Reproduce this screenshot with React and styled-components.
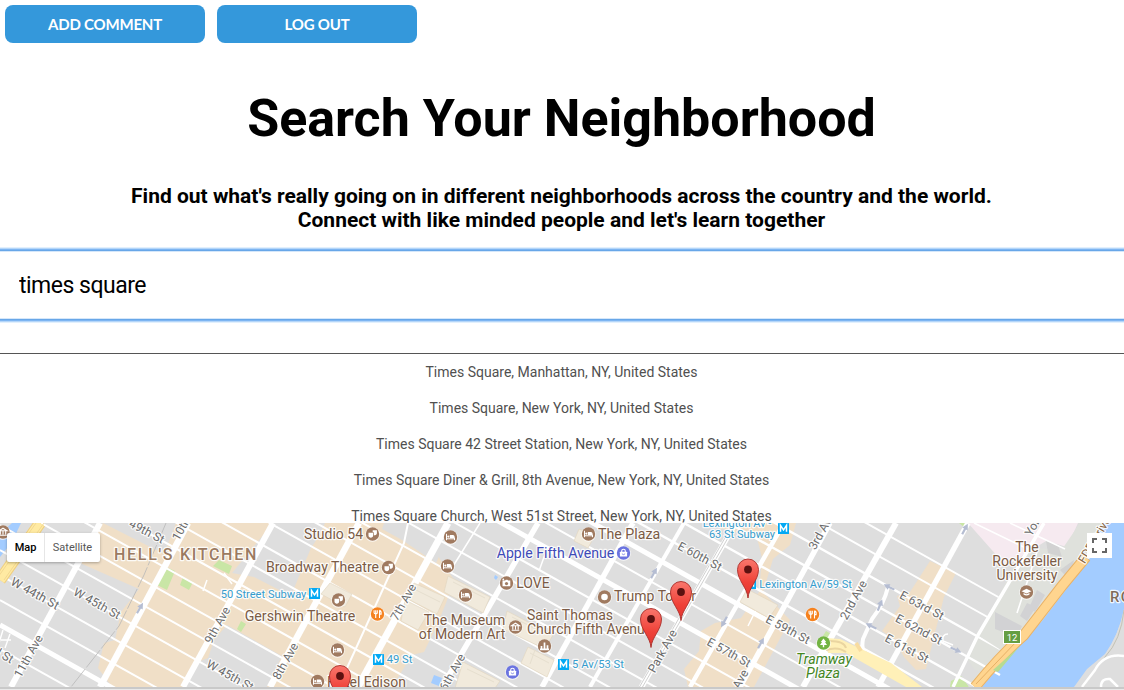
import React from "react";
import styled, { createGlobalStyle } from "styled-components";

const Global = createGlobalStyle`
  * { box-sizing: border-box; }
  body { margin: 0; background: #fff; font-family: Roboto, "Liberation Sans", sans-serif; overflow: hidden; }
`;
const Page = styled.main`
  display: flex;
  flex-direction: column;
  height: 690px;
  overflow: hidden;
`;
const Toolbar = styled.nav`
  display: flex;
  gap: 12px;
  padding: 5px 5px 0;
  height: 43px;
`;
const Button = styled.button`
  width: 200px;
  height: 38px;
  border: 0;
  border-radius: 8px;
  background: #3498db;
  color: #fff;
  font: 700 15px/38px Lato, sans-serif;
  letter-spacing: -0.2px;
  padding: 0;
`;
const Title = styled.h1`
  margin: 45px 1px 0 0;
  text-align: center;
  font-size: 52px;
  line-height: 62px;
  font-weight: 700;
`;
const Subtitle = styled.h2`
  margin: 34px 1px 0 0;
  text-align: center;
  font-size: 21px;
  line-height: 24px;
  font-weight: 700;
`;
const SearchInput = styled.input`
  flex: none;
  margin: 18px 0 0 -2px;
  width: 1128px;
  height: 70px;
  border: 1px solid #68a7e8;
  outline: 0;
  box-shadow: 0 0 0 1px #7db5f2, 0 0 0 2px #b5d6f9, 0 0 0 3px #e2f0fd, inset 0 0 0 1px #d5e7fa;
  padding: 0 20px;
  color: #000;
  font: 400 23px Roboto, sans-serif;
  letter-spacing: -0.5px;
`;
const Results = styled.ul`
  flex: none;
  list-style: none;
  margin: 33px 0 0;
  padding: 0;
  height: 170px;
  border-top: 1px solid #555;
  overflow: hidden;
`;
const Result = styled.li`
  height: 36px;
  margin-right: 1px;
  line-height: 36px;
  text-align: center;
  font-size: 14px;
  color: #505050;
`;
const MapFrame = styled.section`
  position: relative;
  flex: none;
  height: 167px;
  border-bottom: 1px solid #e9e9e9;
  background: #c9c9c9;
`;
const MapDrawing = styled.svg`
  display: block;
  font-family: Roboto, sans-serif;
`;
const MapTypes = styled.div`
  position: absolute;
  left: 7px;
  top: 10px;
  display: flex;
  height: 29px;
  background: #fff;
  border-radius: 2px;
  box-shadow: 0 1px 3px rgba(0, 0, 0, 0.3);
`;
const MapType = styled.div`
  width: ${(p) => p.$width}px;
  text-align: center;
  font-size: 11px;
  line-height: 29px;
  font-weight: ${(p) => (p.$active ? 500 : 400)};
  color: ${(p) => (p.$active ? "#000" : "#565656")};
  & + & { border-left: 1px solid #e6e6e6; }
`;
const Fullscreen = styled.div`
  position: absolute;
  left: 1087px;
  top: 10px;
  width: 25px;
  height: 25px;
  display: grid;
  place-items: center;
  background: #fff;
`;

const results = [
  "Times Square, Manhattan, NY, United States",
  "Times Square, New York, NY, United States",
  "Times Square 42 Street Station, New York, NY, United States",
  "Times Square Diner & Grill, 8th Avenue, New York, NY, United States",
  "Times Square Church, West 51st Street, New York, NY, United States",
];

// Height at x = 0 of every cross street, and its width
const streets = [
  [649, 2], [625, 5], [600, 2], [575, 2], [550, 2], [525, 2], [500, 2], [475, 2],
  [450, 2.2], [424, 2], [398, 2], [372, 2], [346, 2], [320, 2], [294, 2],
  [268, 2], [242, 5], [217, 2], [191, 5], [165, 2.4], [140, 2.4], [115, 2.4], [89, 2.4],
  [64, 2], [38, 2],
];
// Avenues: x at the top edge, x at the bottom edge, width
const avenues = [
  [100, 11, 6], [188, 100, 6.5], [273, 183, 6], [359, 270, 6.5], [448, 358, 7],
  [538, 442, 5.5], [633, 542, 5.5], [684, 590, 4], [784, 690, 4.5],
  [830, 740, 5.5], [896, 803, 6], [968, 878, 5.5],
];

const Label = ({ x, y, children, size = 14, color = "#7b5b45", rotate = 0, anchor = "middle", ...rest }) => (
  <text
    x={x} y={y} fontSize={size} fill={color} textAnchor={anchor} stroke="#fff" strokeOpacity="0.85"
    strokeWidth="2.4" strokeLinejoin="round" paintOrder="stroke"
    transform={rotate ? `rotate(${rotate} ${x} ${y})` : undefined} {...rest}
  >
    {children}
  </text>
);
const Street = (p) => <Label size={12} color="#6b6b6b" {...p} />;
const Metro = ({ x, y }) => (
  <g>
    <rect x={x - 5.5} y={y - 5.5} width="11" height="11" rx="0.6" fill="#03a9f4" />
    <path d={`M${x - 3} ${y + 3.3}v-6.4l3 4.5 3-4.5v6.4`} fill="none" stroke="#fff" strokeWidth="1.5" />
  </g>
);
const glyphs = {
  bed: <g><path d="M-4-3.2v6.4M-4 1.8h8M4 3.2V.6" fill="none" stroke="#fff" strokeWidth="1" /><path d="M-.7-2h3.2Q4-2 4-.4V1H-.7z" fill="#fff" /><circle cx="-2.2" cy="-.4" r="1.1" fill="#fff" /></g>,
  theatre: <g fill="#fff"><path d="M-4-1.3h4.6v2.8c0 1.3-1 2.2-2.3 2.2S-4 2.8-4 1.5z" /><path d="M.2-3.8h4.2V-1c0 1.3-.8 2.1-1.9 2.2H1.3v-3H.2z" /></g>,
  museum: <path d="M-4-1.2L0-3.8l4 2.6zM-3.8 3.2h7.6M-2.7-1v3.4M0-1v3.4M2.7-1v3.4" fill="none" stroke="#fff" strokeWidth="1.1" />,
  food: <path d="M-1.8-3.7v7.7M-3.4-3.7v2.4q0 1 1.6 1t1.6-1v-2.4M2-3.8v7.8M2-3.6q2 .3 1.6 3.7H2" fill="none" stroke="#fff" strokeWidth="1.1" />,
  bag: <g><rect x="-3.6" y="-1.2" width="7.2" height="4.7" rx=".5" fill="#fff" /><path d="M-1.8-1v-1q0-1.7 1.8-1.7T1.8-2v1" fill="none" stroke="#fff" strokeWidth="1.1" /><path d="M-1.6.8q1.6 1.7 3.2 0" fill="none" stroke="#6b74e0" strokeWidth=".8" /></g>,
  city: <path d="M-3 3.5V0M0 3.5v-7M3 3.5V-.8M-4.5 3.3h9" stroke="#fff" strokeWidth="1.7" />,
  dot: <circle r="3.3" fill="#fff" />,
  camera: <g><path d="M-4-2.4h2.6l.8-.9H1l.6.9h2.2v5.6H-4z" fill="#fff" /><circle cx="0" cy=".6" r="1.6" fill="#a07d63" /><circle cx="-3.2" cy="-3.6" r=".9" fill="#fff" /></g>,
  school: <path d="M-5-.8L0-3.2l5 2.4L0 1.6zM-3 .9v1.6q3 1.8 6 0V.9L0 2.3zM4.3-.6v3" fill="#fff" />,
  tree: <path d="M0-4.6L2.7-1H1.5l2 3H.7v2.2H-.7V2h-2.8l2-3h-1.2z" fill="#fff" />,
};
const Poi = ({ x, y, kind, color = "#a07a60" }) => (
  <g transform={`translate(${x} ${y})`}>
    <circle r="7.3" cy=".5" fill="#fff" opacity=".8" />
    <circle r="6.7" fill={color} />
    {glyphs[kind]}
  </g>
);
const Pin = ({ x, y }) => (
  <g transform={`translate(${x} ${y})`}>
    <path d="M0 28.5C-.7 18-10.5 11-10.5 0A10.5 10.5 0 0 1 10.5 0C10.5 11 .7 18 0 28.5z" fill="url(#pin)" stroke="#a92c28" strokeWidth=".9" />
    <circle r="3.9" fill="#5c1110" />
  </g>
);
const Arrow = ({ x, y, rotate }) => (
  <path transform={`translate(${x} ${y}) rotate(${rotate})`} d="M-6-1.1h6v-2L6 0 0 3.1v-2h-6z" fill="#b5bdd2" />
);

function CityMap() {
  const y0 = 523;
  const blue = "#369ccd";
  return (
    <MapDrawing width="1124" height="164" viewBox="0 523 1124 164">
      <defs>
        <linearGradient id="pin" x1="0" y1="0" x2="0" y2="1">
          <stop offset="0" stopColor="#fa776d" />
          <stop offset=".6" stopColor="#ef4138" />
          <stop offset="1" stopColor="#df3630" />
        </linearGradient>
      </defs>
      <rect y={y0} width="1124" height="164" fill="#dedede" />
      <g fill="#f0dfc7">
        <path d="M103 523L164 554L176 523H412L430 540L438 556L454 580L446 603L437 625L424 652L412 655L392 687H112L98 668L104 643L115 640L121 612L139 589L80 563L96 535z" />
        <path d="M722 523h74l-6 22-17 14-10 33 27 28-36 67h-66l-4-18 15-18 2-20 14-8 26-5 18-26 3-34-5-20-38-10z" />
        <path d="M930 561l26 12-12 24-18 72-10 1-12-13-10-18-12-8 18-25-3-10 13-4z" />
      </g>
      <g fill="#dedede">
        <path d="M273 523h52l-6 13-8 12-16 38-4 10-37-19-22-4z" />
        <path d="M227 625l55 31-15 31h-82l13-25 10-4 6-18z" />
        <path d="M384 523h70l-18 40-34-23-20-11z" />
      </g>
      <g fill="#c9e6a6">
        <path d="M166 567l9 4-8 19-10-5zM183 577l10 5-4 8-9-5zM219 560l13 6-3 8-16-8zM241 621l5 3-5 8-4-3z" />
        <path d="M826 631l7 4-5 9-7-5zM951 681l10-5 8 11h-19zM959 523h9l-4 4z" />
      </g>
      <path d="M968 523h110l-11 24-21-6-40 25z" fill="#f6eaf0" />
      <path d="M978 631l28 17-17 27-15-6-7-10z" fill="#dfe1dc" />
      <path d="M1080 523h44v60l-90 60-66 44z" fill="#dfe1dc" />
      <path d="M1102 523l-9 24-10 20L982 687h94l8-9 21-23q13-18 19-46V523z" fill="#a3ccff" />
      <path d="M1124 610q-5 24-19 44l-18 15-13 18h50z" fill="#dedede" />
      <path d="M1124 610q-3 30-19 47l-22 30" fill="none" stroke="#c3c2b4" />
      <path d="M1124 656q-20-3-29 14l-13 17M1101 687q0-9 9-8l8 8" fill="none" stroke="#fff" strokeWidth="2.5" />
      <path d="M12 523h9l-9 19-12 15v-23z" fill="#a3ccff" />
      <path d="M0 556v14l-3 3z" fill="#a3ccff" />
      <path d="M434 675l8 3-3 8-8-3zM495 575l3 2-2 3-2-2z" fill="#a3ccff" />

      <g stroke="#fff" fill="none">
        {streets.map(([c, w]) => {
          const end = c < 300 ? 1000 : 700;
          return <path key={c} d={`M0 ${c}L${end} ${c + 0.56 * end}`} strokeWidth={w} />;
        })}
      </g>
      <path d="M1030 548l40 2 12 10-15 28-25 33-35 33-28-18 28-56z" fill="#dfe1dc" />
      <path d="M1046 541l12 4 4 12-14-4zM1060 570l14-10-4 20z" fill="#d2d2d2" />
      <g stroke="#fff" fill="none">
        {avenues.map(([a, b, w]) => (
          <path key={a} d={`M${a} 523L${b} 687`} strokeWidth={w} />
        ))}
        <path d="M408 523l-4 20-57 125" strokeWidth="2" />
        <path d="M1044 523l-66 112-25 52" strokeWidth="3.5" />
        <path d="M974 523l60 29M1010 523l55 26M1037 552l-20 61" strokeWidth="1.6" />
        <path d="M888 587q-4 17-16 32l-9 20q-3 16 8 20l43 28" strokeWidth="4" />
        <path d="M480 523l-30 48M548 546l-9 25M758 606l-10 20M207 580l-4 11M224 573l8 11" strokeWidth="1.5" />
      </g>
      <path d="M734 523L640 687M737 523L643 687" stroke="#fff" strokeWidth="3" />
      <path d="M733.5 523L639.5 687M736.5 523L642.5 687" stroke="#cbcbcb" strokeWidth=".9" />
      <path d="M40 523L0 580" stroke="#efcf80" strokeWidth="12" />
      <path d="M40 523L0 580" stroke="#ffeaa2" strokeWidth="10" />
      <path d="M36 523L-4 580M44 523L4 580" stroke="#efd38b" strokeWidth=".8" />
      <path d="M166 523l-22 52-25 51-48 61" stroke="#b7b7b7" fill="none" strokeDasharray="22 2" strokeWidth=".8" />
      <path d="M826 638l14 1 51 24 31 24h-16l-60-34-18 0z" fill="#fff0b8" />
      <path d="M830 641q14 0 16 7M826 650q12-4 20 2" fill="none" stroke="#ead5a0" strokeWidth="2" />
      <path d="M856 643l5 8" stroke="#f8dca0" strokeWidth="4" />
      <path d="M1086 557l-24 29-38 49q-23 20-49 52" fill="none" stroke="#e9b267" strokeWidth="11" />
      <path d="M1085.500 557.500l-23.500 28.500-38 49q-23 20-49 52" fill="none" stroke="#ffd58f" strokeWidth="9" />
      <path d="M1016 642l-40 42" stroke="#e7b066" strokeWidth="1" />
      <path d="M1020 646l-22 26-5-2z" fill="#b8db91" />

      <g fill="#f1eadc" stroke="#e3d7c2" strokeWidth=".7">
        <path d="M747 589l31 16-9 13-29-16zM330 583l22 11-7 13-24-13zM414 583l31 14-8 17-29-15zM405 600l24 12-11 18-17-9zM448 576l42 21-7 16-39-21zM507 611l46 24-8 14-42-20zM528 647l26 13-7 17-26-14zM463 662l37 19-5 7h-40zM579 529l16 6-7 13-14-7z" />
      </g>
      <g fill="#d2d2d4">
        <path d="M1037 590l8 5-10 17-6-4zM995 612l27 14-5 11-22-8zM1027 603l9 4-9 14-7-5z" />
      </g>
      <g stroke="#e6dfcf" fill="none"><path d="M416 590l24 12M453 582l32 16M530 653l19 10M535 650l-5 14M467 669l27 13M512 617l34 17" /></g>
      <path d="M948 634q-6 0-5 7l10 4M1 640h10M3 630l-4 13M10 634l-5 14" fill="none" stroke="#fff" strokeWidth="1.4" />
      <Arrow x={140} y={608} rotate={-60} /><Arrow x={654} y={573} rotate={-61} />
      <Arrow x={724} y={622} rotate={119} /><Arrow x={761} y={643} rotate={-61} />
      <Arrow x={889} y={587} rotate={206} /><Arrow x={880} y={605} rotate={-68} />
      <Arrow x={871} y={626} rotate={206} />
      <Arrow x={965} y={529} rotate={-62} /><Arrow x={956} y={650} rotate={25} />

      <Street x={33} y={597} rotate={29} size={12.3}>W 44th St</Street>
      <Street x={95} y={607} rotate={29}>W 45th St</Street>
      <Street x={145} y={535} rotate={28}>49th St</Street>
      <Street x={228} y={679} rotate={29}>W 45th St</Street>
      <Street x={-3} y={656} rotate={29}>3rd St</Street>
      <Street x={32} y={658} rotate={-61}>11th Ave</Street>
      <Street x={190} y={521} rotate={-61}>10th Ave</Street>
      <Street x={221} y={627} rotate={-61}>9th Ave</Street>
      <Street x={289} y={663} rotate={-61}>8th Ave</Street>
      <Street x={407} y={604} rotate={-61}>7th Ave</Street>
      <Street x={456} y={674} rotate={-61}>6th Ave</Street>
      <Street x={666} y={653} rotate={-61}>Park Ave</Street>
      <Street x={739} y={690} rotate={-61}>3rd Ave</Street>
      <Street x={825} y={533} rotate={-61}>3rd Ave</Street>
      <Street x={857} y={602} rotate={-61}>2nd Ave</Street>
      <Street x={1043} y={517} rotate={-60}>York Ave</Street>
      <Street x={698} y={560} rotate={28}>E 60th St</Street>
      <Street x={727} y={656} rotate={29}>E 57th St</Street>
      <Street x={786} y={633} rotate={28}>E 59th St</Street>
      <Street x={920} y={609} rotate={28}>E 63rd St</Street>
      <Street x={917} y={633} rotate={28}>E 62nd St</Street>
      <Street x={905} y={652} rotate={28}>E 61st St</Street>
      <Street x={1098} y={542} rotate={-59} color="#886544">FDR Drive</Street>

      <Label x={186} y={560} size={16} color="#9b7a61" letterSpacing="1.7" fontWeight="500">HELL'S KITCHEN</Label>
      <Label x={333.500} y={539}>Studio 54</Label>
      <Label x={322.500} y={572} size={14.1}>Broadway Theatre</Label>
      <Label x={300} y={621} size={14.2}>Gershwin Theatre</Label>
      <Label x={464.500} y={625}>The Museum</Label>
      <Label x={462} y={639}>of Modern Art</Label>
      <Label x={533} y={588}>LOVE</Label>
      <Label x={527} y={620} anchor="start">Saint Thomas</Label>
      <Label x={527} y={634} anchor="start">Church Fifth Avenue</Label>
      <Label x={598} y={539} anchor="start" size={14.2}>The Plaza</Label>
      <Label x={614} y={601} anchor="start">Trump Tower</Label>
      <Label x={327} y={687} anchor="start">Hotel Edison</Label>
      <Label x={1027} y={552}>The</Label>
      <Label x={1027} y={566}>Rockefeller</Label>
      <Label x={1027} y={580}>University</Label>
      <Label x={1110} y={602} anchor="start" size={15} color="#806b59" fontWeight="500" letterSpacing="1.2">ROOSEVELT</Label>
      <Label x={555.500} y={558} size={14.1} color="#3e4bb8">Apple Fifth Avenue</Label>
      <Label x={824} y={664} size={14.2} color="#43861f" fontStyle="italic">Tramway</Label>
      <Label x={823} y={678} size={14.2} color="#43861f" fontStyle="italic">Plaza</Label>
      <Label x={263.500} y={598} size={11.1} color={blue}>50 Street Subway</Label>
      <Label x={399.500} y={663} size={11.2} color={blue}>49 St</Label>
      <Label x={598} y={668} size={11.2} color={blue}>5 Av/53 St</Label>
      <Label x={737} y={527} size={11} color={blue}>Lexington Av -</Label>
      <Label x={742} y={538} size={11} color={blue}>63 St Subway</Label>
      <Label x={805.500} y={588} size={11} color={blue}>Lexington Av/59 St</Label>

      <Metro x={314.5} y={593.5} /><Metro x={378.5} y={659.5} />
      <Metro x={563.5} y={664.5} /><Metro x={783.5} y={528.5} /><Metro x={750.5} y={583.5} />
      <Poi x={3} y={532} kind="museum" />
      <Poi x={372.5} y={534} kind="theatre" /><Poi x={388.5} y={567.5} kind="theatre" />
      <Poi x={338.5} y={600} kind="theatre" />
      <Poi x={337.5} y={650} kind="bed" /><Poi x={317.5} y={681.5} kind="bed" />
      <Poi x={450.5} y={537} kind="bed" /><Poi x={447.5} y={566} kind="bed" />
      <Poi x={465.5} y={595} kind="bed" /><Poi x={588.5} y={534} kind="bed" />
      <Poi x={506.5} y={583} kind="camera" /><Poi x={515.5} y={627} kind="museum" />
      <Poi x={544.5} y={646} kind="city" /><Poi x={604.5} y={597} kind="dot" />
      <Poi x={1026.5} y={592} kind="school" />
      <Poi x={377.5} y={614} kind="food" color="#f5821f" /><Poi x={812.5} y={614.5} kind="food" color="#f5821f" />
      <Poi x={623.5} y={553} kind="bag" color="#6b74e0" /><Poi x={512.5} y={672} kind="bag" color="#6b74e0" />
      <Poi x={823.5} y={643} kind="tree" color="#73b443" />
      <rect x="1003.5" y="630.5" width="17" height="13" fill="#659e43" stroke="#fff" />
      <text x="1012" y="640.500" fontSize="9.5" fill="#fff" textAnchor="middle">12</text>
      <Pin x={748} y={569.5} /><Pin x={681} y={592} /><Pin x={651} y={619} /><Pin x={340} y={676} />
    </MapDrawing>
  );
}

export default function App() {
  return (
    <Page>
      <Global />
      <Toolbar>
        <Button>ADD COMMENT</Button>
        <Button>LOG OUT</Button>
      </Toolbar>
      <Title>Search Your Neighborhood</Title>
      <Subtitle>
        Find out what's really going on in different neighborhoods across the country and the world.
        <br />
        Connect with like minded people and let's learn together
      </Subtitle>
      <SearchInput defaultValue="times square" />
      <Results>
        {results.map((r) => <Result key={r}>{r}</Result>)}
      </Results>
      <MapFrame>
        <CityMap />
        <MapTypes>
          <MapType $active $width={37}>Map</MapType>
          <MapType $width={56}>Satellite</MapType>
        </MapTypes>
        <Fullscreen>
          <svg width="15" height="15" viewBox="0 0 15 15" fill="none" stroke="#666" strokeWidth="2">
            <path d="M1 5V1h4M10 1h4v4M14 10v4h-4M5 14H1v-4" />
          </svg>
        </Fullscreen>
      </MapFrame>
    </Page>
  );
}
